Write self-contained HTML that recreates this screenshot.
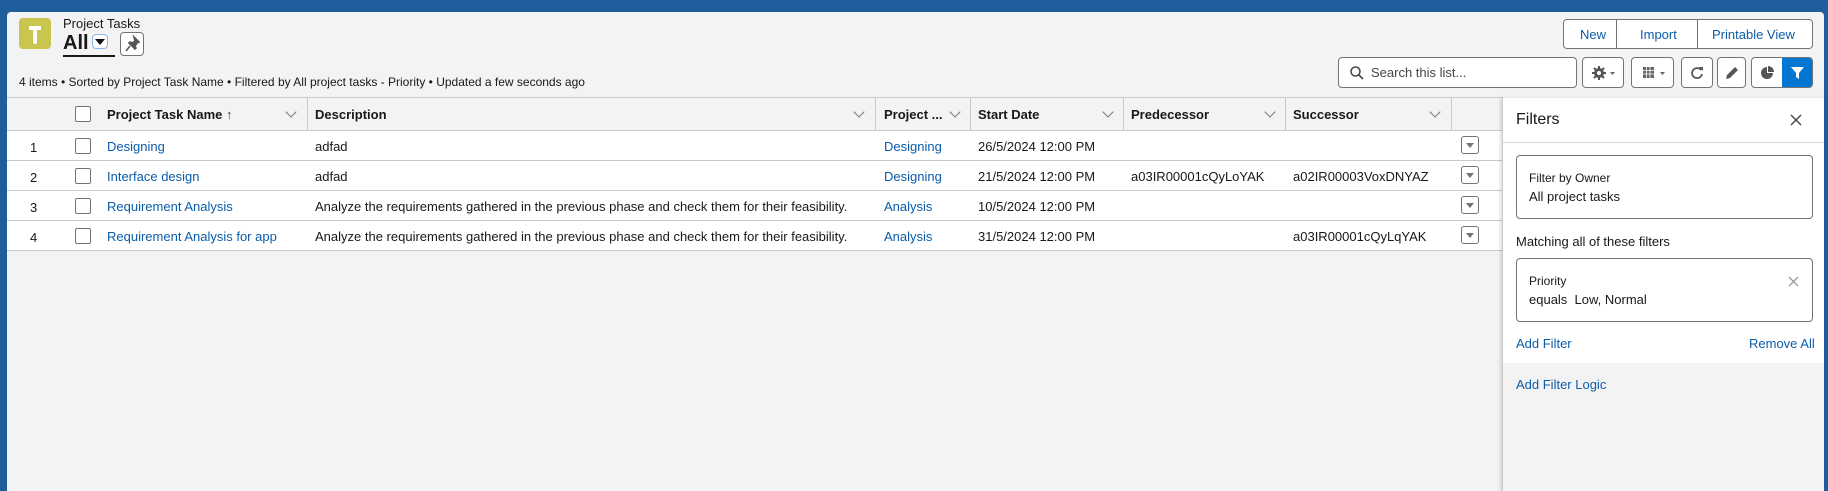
<!DOCTYPE html>
<html><head><meta charset="utf-8"><style>
*{box-sizing:border-box;margin:0;padding:0}
body{width:1828px;height:491px;overflow:hidden;background:#1f5e9c;font-family:"Liberation Sans",sans-serif;color:#181818;font-size:13px;position:relative}
.a{position:absolute;white-space:nowrap}
.panel{position:absolute;left:7px;top:12px;width:1817px;height:479px;background:#f3f3f3;border-radius:4px 4px 0 0}
.lnk{color:#0b5cab}
.btn{position:absolute;border:1px solid #747474;border-radius:4px;background:#fff}
.hd{font-weight:bold;font-size:13px}
.chk{position:absolute;width:16px;height:16px;border:1px solid #747474;border-radius:2px;background:#fff}
.row{position:absolute;left:7px;width:1496px;height:30px;background:#fff;border-bottom:1px solid #c9c9c9}
.ab{position:absolute;left:1461px;width:18px;height:18px;border:1px solid #747474;border-radius:3px;background:#fff}
.ab:after{content:"";position:absolute;left:4px;top:6px;border-left:4px solid transparent;border-right:4px solid transparent;border-top:5px solid #747474}
.sep{position:absolute;top:98px;width:1px;height:32px;background:#c9c9c9}
.chev{position:absolute;top:108px;width:8px;height:8px;border-right:1.3px solid #747474;border-bottom:1.3px solid #747474;transform:rotate(45deg)}
</style></head><body>
<div class="panel"></div>
<div class="a" style="left:19px;top:18px;width:32px;height:31px;background:#c9c64f;border-radius:4px">
<svg width="32" height="31" viewBox="0 0 32 31"><path d="M10 8h12v4h-4v12a2 2 0 0 1-4 0V12h-4z" fill="#fff"/></svg></div>
<div class="a" style="left:63px;top:16px;font-size:13px">Project Tasks</div>
<div class="a" style="left:63px;top:32px;font-size:20px;font-weight:bold">All</div>
<div class="a" style="left:92px;top:34px;width:16px;height:15px;border:1px solid #8ab6e6;border-radius:4px;background:#fff"><div style="position:absolute;left:2px;top:4px;border-left:5px solid transparent;border-right:5px solid transparent;border-top:6px solid #111"></div></div>
<div class="a" style="left:63px;top:55px;width:52px;height:2px;background:#181818"></div>
<div class="btn" style="left:120px;top:32px;width:24px;height:24px"><svg width="22" height="22" viewBox="0 0 22 22"><path d="M13 4l5 5-2 1-2 3 1 2-1 1-6-6 1-1 2 1 3-2zM9 13l-4 5" stroke="#555" stroke-width="1.6" fill="#555"/></svg></div>
<div class="a" style="left:19px;top:75px;font-size:12px">4 items • Sorted by Project Task Name • Filtered by All project tasks - Priority • Updated a few seconds ago</div>

<div class="btn" style="left:1563px;top:19px;width:250px;height:30px"></div>
<div class="a" style="left:1616px;top:19px;width:1px;height:30px;background:#747474"></div>
<div class="a" style="left:1697px;top:19px;width:1px;height:30px;background:#747474"></div>
<div class="a lnk" style="left:1580px;top:27px">New</div>
<div class="a lnk" style="left:1640px;top:27px">Import</div>
<div class="a lnk" style="left:1712px;top:27px">Printable View</div>

<div class="btn" style="left:1338px;top:57px;width:239px;height:31px"></div>
<svg class="a" style="left:1349px;top:65px" width="16" height="16"><circle cx="6.5" cy="6.5" r="4.5" stroke="#444" stroke-width="1.5" fill="none"/><path d="M10 10l4 4" stroke="#444" stroke-width="1.6"/></svg>
<div class="a" style="left:1371px;top:65px;color:#444">Search this list...</div>
<div class="btn" style="left:1582px;top:57px;width:42px;height:31px"><svg width="40" height="29"><circle cx="16" cy="15" r="5" fill="#555"/><circle cx="16" cy="15" r="2" fill="#fff"/><path d="M16 8v14M9 15h14M11 10l10 10M21 10l-10 10" stroke="#555" stroke-width="2"/><circle cx="16" cy="15" r="2" fill="#fff"/><path d="M27 14h5l-2.5 3z" fill="#666"/></svg></div>
<div class="btn" style="left:1631px;top:57px;width:43px;height:31px"><svg width="41" height="29"><rect x="11" y="9" width="11" height="11" fill="#666"/><path d="M11 12.5h11M11 16h11M14.5 9v11M18 9v11" stroke="#fff" stroke-width=".8"/><path d="M28 14h5l-2.5 3z" fill="#666"/></svg></div>
<div class="btn" style="left:1681px;top:57px;width:32px;height:31px"><svg width="30" height="29"><path d="M19 12a5 5 0 1 0 1 4" stroke="#555" stroke-width="1.8" fill="none"/><path d="M17 9l4 0 0 4z" fill="#555"/></svg></div>
<div class="btn" style="left:1717px;top:57px;width:29px;height:31px"><svg width="27" height="29"><path d="M8 21l1-4 8-8 3 3-8 8z" fill="#555"/></svg></div>
<div class="btn" style="left:1751px;top:57px;width:62px;height:31px;overflow:hidden"><svg width="31" height="29"><path d="M15 9a6 6 0 1 0 6 6h-6z" fill="#555"/><path d="M16 8v6h6a6 6 0 0 0-6-6z" fill="#555"/></svg><div style="position:absolute;left:30px;top:0;width:32px;height:31px;background:#0176d3"><svg width="32" height="29"><path d="M9 9h13l-5 6v6l-3-2v-4z" fill="#fff"/></svg></div></div>

<!-- table -->
<div class="a" style="left:7px;top:97px;width:1496px;height:1px;background:#c9c9c9"></div>
<div class="a" style="left:7px;top:130px;width:1496px;height:1px;background:#c9c9c9"></div>
<div class="chk" style="left:75px;top:106px"></div>
<div class="a hd" style="left:107px;top:107px">Project Task Name <span style="font-weight:normal;color:#444">↑</span></div>
<div class="chev" style="left:287px"></div><div class="sep" style="left:307px"></div>
<div class="a hd" style="left:315px;top:107px">Description</div>
<div class="chev" style="left:855px"></div><div class="sep" style="left:875px"></div>
<div class="a hd" style="left:884px;top:107px">Project ...</div>
<div class="chev" style="left:951px"></div><div class="sep" style="left:970px"></div>
<div class="a hd" style="left:978px;top:107px">Start Date</div>
<div class="chev" style="left:1104px"></div><div class="sep" style="left:1123px"></div>
<div class="a hd" style="left:1131px;top:107px">Predecessor</div>
<div class="chev" style="left:1266px"></div><div class="sep" style="left:1285px"></div>
<div class="a hd" style="left:1293px;top:107px">Successor</div>
<div class="chev" style="left:1431px"></div><div class="sep" style="left:1451px"></div>

<div class="row" style="top:131px"></div>
<div class="row" style="top:161px"></div>
<div class="row" style="top:191px"></div>
<div class="row" style="top:221px"></div>

<div class="a" style="left:30px;top:140px">1</div><div class="chk" style="left:75px;top:138px"></div>
<div class="a lnk" style="left:107px;top:139px">Designing</div><div class="a" style="left:315px;top:139px">adfad</div>
<div class="a lnk" style="left:884px;top:139px">Designing</div><div class="a" style="left:978px;top:139px">26/5/2024 12:00 PM</div>
<div class="ab" style="top:136px"></div>

<div class="a" style="left:30px;top:170px">2</div><div class="chk" style="left:75px;top:168px"></div>
<div class="a lnk" style="left:107px;top:169px">Interface design</div><div class="a" style="left:315px;top:169px">adfad</div>
<div class="a lnk" style="left:884px;top:169px">Designing</div><div class="a" style="left:978px;top:169px">21/5/2024 12:00 PM</div>
<div class="a" style="left:1131px;top:169px">a03IR00001cQyLoYAK</div><div class="a" style="left:1293px;top:169px">a02IR00003VoxDNYAZ</div>
<div class="ab" style="top:166px"></div>

<div class="a" style="left:30px;top:200px">3</div><div class="chk" style="left:75px;top:198px"></div>
<div class="a lnk" style="left:107px;top:199px">Requirement Analysis</div><div class="a" style="left:315px;top:199px">Analyze the requirements gathered in the previous phase and check them for their feasibility.</div>
<div class="a lnk" style="left:884px;top:199px">Analysis</div><div class="a" style="left:978px;top:199px">10/5/2024 12:00 PM</div>
<div class="ab" style="top:196px"></div>

<div class="a" style="left:30px;top:230px">4</div><div class="chk" style="left:75px;top:228px"></div>
<div class="a lnk" style="left:107px;top:229px">Requirement Analysis for app</div><div class="a" style="left:315px;top:229px">Analyze the requirements gathered in the previous phase and check them for their feasibility.</div>
<div class="a lnk" style="left:884px;top:229px">Analysis</div><div class="a" style="left:978px;top:229px">31/5/2024 12:00 PM</div>
<div class="a" style="left:1293px;top:229px">a03IR00001cQyLqYAK</div>
<div class="ab" style="top:226px"></div>

<!-- filter panel -->
<div class="a" style="left:1502px;top:98px;width:322px;height:393px;background:#f3f3f3;border-left:1px solid #c9c9c9;box-shadow:-2px 0 3px rgba(0,0,0,.12)"></div>
<div class="a" style="left:1503px;top:98px;width:321px;height:265px;background:#fff"></div>
<div class="a" style="left:1503px;top:142px;width:321px;height:1px;background:#d8d8d8"></div>
<div class="a" style="left:1516px;top:111px;font-size:16px">Filters</div>
<svg class="a" style="left:1790px;top:114px" width="12" height="12"><path d="M1 1l10 10M11 1L1 11" stroke="#444" stroke-width="1.4"/></svg>
<div class="a" style="left:1516px;top:155px;width:297px;height:64px;border:1px solid #747474;border-radius:4px"></div>
<div class="a" style="left:1529px;top:171px;font-size:12px">Filter by Owner</div>
<div class="a" style="left:1529px;top:189px">All project tasks</div>
<div class="a" style="left:1516px;top:234px">Matching all of these filters</div>
<div class="a" style="left:1516px;top:258px;width:297px;height:64px;border:1px solid #747474;border-radius:4px"></div>
<div class="a" style="left:1529px;top:274px;font-size:12px">Priority</div>
<div class="a" style="left:1529px;top:292px">equals &nbsp;Low, Normal</div>
<svg class="a" style="left:1788px;top:276px" width="11" height="11"><path d="M1 1l9 9M10 1L1 10" stroke="#999" stroke-width="1.3"/></svg>
<div class="a lnk" style="left:1516px;top:336px">Add Filter</div>
<div class="a lnk" style="left:1749px;top:336px">Remove All</div>
<div class="a lnk" style="left:1516px;top:377px">Add Filter Logic</div>
</body></html>
